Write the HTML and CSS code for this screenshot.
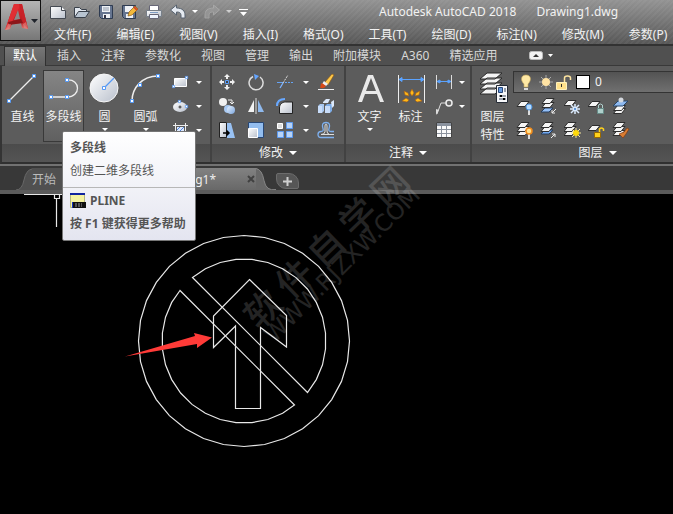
FILE: index.html
```html
<!DOCTYPE html>
<html lang="zh-CN">
<head>
<meta charset="utf-8">
<meta name="viewport" content="width=device-width, initial-scale=1">
<title>Autodesk AutoCAD 2018 Drawing1.dwg</title>
<link rel="stylesheet" href="styles.css">
</head>
<body>
<svg class="defs" width="0" height="0" aria-hidden="true">
  <defs>
    <linearGradient id="metal" x1="0" y1="0" x2="1" y2="1"><stop offset="0" stop-color="#fff"/><stop offset="1" stop-color="#b9c0cc"/></linearGradient>
    <linearGradient id="red" x1="0" y1="0" x2="0" y2="1"><stop offset="0" stop-color="#e3262b"/><stop offset=".7" stop-color="#b51f24"/><stop offset="1" stop-color="#e88a83"/></linearGradient>
    <linearGradient id="glass" x1="0" y1="0" x2="1" y2="1"><stop offset="0" stop-color="#e8f2ff"/><stop offset="1" stop-color="#7aa5dd"/></linearGradient>
    <symbol id="sheet" viewBox="0 0 12 6" overflow="visible"><path d="M4 .5h8L8 5.500H0z" fill="#f4f4f4" stroke="#2d2d2d"/></symbol>
    <symbol id="grip" viewBox="0 0 4 4" overflow="visible"><path d="M.5.5h3v3h-3z" fill="#fff" stroke="#5599f5"/></symbol>
  </defs>
</svg>

<header class="titlebar">
  <button class="app-button" aria-label="应用程序菜单">
    <svg width="39" height="38" viewBox="1 1 39 38"><path d="M5 29 14 3h8l6 25-6-1-1-5-9 1-2 5z" fill="url(#red)"/><path d="M14 3h7L11 23l-6 6z" fill="#e02f34"/><path d="m18 9 2 9-6 1z" fill="#8a8a8a"/><path d="m8 21 13-3 2 4-14 2z" fill="#8c171b"/><path d="m19 3 3 0 6 25-5-6z" fill="#c82228"/><path d="m5 29 3-6 3 0-2 5zM23 23l3-2 2 7-4-1z" fill="#e58a84" opacity=".6"/><path d="M31 18h7l-3.500 4z" fill="#20242c"/></svg>
  </button>
  <div class="bars">
    <div class="quick">
      <button class="tool" aria-label="新建"><svg width="18" height="16"><path d="M1.500 2.500h11l4 4v8h-15z" fill="url(#metal)" stroke="#444a52"/><path d="M12.500 2.500v4h4" fill="#fff" stroke="#444a52"/></svg></button>
      <button class="tool" aria-label="打开"><svg width="18" height="16"><path d="M1.500 13.500v-10h5l2 2h5v2" fill="#dfe5ed" stroke="#39404a"/><path d="m1.500 13.500 4-6h11l-4 6z" fill="#b8c4d1" stroke="#39404a"/></svg></button>
      <button class="tool" aria-label="保存"><svg width="16" height="16"><path d="M1.500 1.500h13v13h-11l-2-2z" fill="#667590" stroke="#2e3b51"/><path d="M4 2h8v6H4zM5 10h7v4H5z" fill="#eef1f5"/><path d="M6 11h2v3H6z" fill="#334"/><path d="M5 4h6M5 6h6" stroke="#8d98a9"/></svg></button>
      <button class="tool" aria-label="另存为"><svg width="18" height="16"><path d="M1.500 1.500h13v13h-11l-2-2z" fill="#667590" stroke="#2e3b51"/><path d="M4 2h8v6H4zM5 10h7v4H5z" fill="#eef1f5"/><path d="m7 12 1-4 6-6 3 3-6 6z" fill="#f2b93b" stroke="#8b5a18" stroke-width=".7"/><path d="m13 3 3 3" stroke="#d34828" stroke-width="2"/></svg></button>
      <button class="tool" aria-label="打印"><svg width="18" height="16"><path d="M4.500 1.500h9v5h-9z" fill="#fff" stroke="#667"/><path d="M1.500 6.500h15v6h-15z" fill="url(#metal)" stroke="#777f89"/><path d="M4.500 10.500h9v4h-9z" fill="#edf4ff" stroke="#667"/><path d="M5 8.500h8" stroke="#7f9cc4"/></svg></button>
      <button class="tool" aria-label="放弃"><svg width="18" height="16"><path d="m1.500 6 6-5v3c6 0 8.500 3 8.500 7v3h-4v-2c0-3-1-4-4.500-4v3z" fill="#e5eaf1" stroke="#586370"/></svg></button>
      <button class="drop" aria-label="放弃列表"><i class="caret"></i></button>
      <button class="tool faded" aria-label="重做"><svg width="18" height="16"><path d="m16.500 6-6-5v3C4.500 4 2 7 2 11v3h4v-2c0-3 1-4 4.500-4v3z" fill="#a0a0a0" stroke="#bbb"/></svg></button>
      <button class="drop faded" aria-label="重做列表"><i class="caret"></i></button>
      <button class="drop custom" aria-label="自定义快速访问工具栏"><svg width="9" height="8"><path d="M0 1h9v1H0zM1 4h7L4.500 8z" fill="#fff"/></svg></button>
      <h1 class="title"><span>Autodesk AutoCAD 2018</span><span>Drawing1.dwg</span></h1>
    </div>
    <nav class="menu">
      <a href="#">文件(F)</a><a href="#">编辑(E)</a><a href="#">视图(V)</a><a href="#">插入(I)</a><a href="#">格式(O)</a><a href="#">工具(T)</a><a href="#">绘图(D)</a><a href="#">标注(N)</a><a href="#">修改(M)</a><a href="#">参数(P)</a>
    </nav>
  </div>
</header>

<nav class="tabs">
  <a class="current" href="#">默认</a><a href="#">插入</a><a href="#">注释</a><a href="#">参数化</a><a href="#">视图</a><a href="#">管理</a><a href="#">输出</a><a href="#">附加模块</a><a href="#">A360</a><a href="#">精选应用</a>
  <button class="fold" aria-label="最小化功能区"><svg width="24" height="9"><rect x=".5" y=".5" width="13" height="8" rx="2" fill="#f3f3f3" stroke="#bbb"/><path d="M4 6h6L7 3z" fill="#333"/><path d="M19 3h5l-2.500 3z" fill="#fff"/></svg></button>
</nav>

<div class="ribbon">
  <section class="panel draw">
    <div class="body">
      <button class="large"><svg width="36" height="34"><path d="M4 30 29 5" stroke="#eee" stroke-width="1.300"/><use href="#grip" x="2" y="28" width="4" height="4"/><use href="#grip" x="27" y="3" width="4" height="4"/></svg>直线</button>
      <div class="anchor">
        <button class="large hot" aria-describedby="tip"><svg width="36" height="34"><path d="M5 26h16c14 0 14-18 0-17" fill="none" stroke="#eee" stroke-width="1.300"/><use href="#grip" x="3" y="24" width="4" height="4"/><use href="#grip" x="19" y="24" width="4" height="4"/><use href="#grip" x="19" y="7" width="4" height="4"/></svg>多段线</button>
        <div class="tooltip" id="tip" role="tooltip">
          <div class="tip-head"><strong>多段线</strong><span>创建二维多段线</span></div>
          <div class="tip-foot">
            <strong class="command"><svg width="16" height="16"><path d="M.5 1.500h14v13H.5z" fill="#f5f3a0" stroke="#b6b680"/><path d="M0 1h15" stroke="#1125a0" stroke-width="2"/><path d="M3 9h13v6H3z" fill="#111"/><path d="M2.500 9v6" stroke="#1232c5"/><path d="M5 11h2m1 0h4M5 13h7" stroke="#999" stroke-dasharray="2 1"/></svg>PLINE</strong>
            <strong>按 F1 键获得更多帮助</strong>
          </div>
        </div>
      </div>
      <button class="large"><svg width="36" height="34"><circle cx="17" cy="17" r="14" fill="url(#metal)" stroke="#f7f7f7"/><path d="m17 17 10-10" stroke="#5599f5" stroke-width="1.300"/><use href="#grip" x="15" y="15" width="4" height="4"/></svg>圆<i class="caret"></i></button>
      <button class="large"><svg width="36" height="34"><path d="M4 30C4 17 14 5 30 5" fill="none" stroke="#eee" stroke-width="1.500"/><use href="#grip" x="2" y="28" width="4" height="4"/><use href="#grip" x="10" y="12" width="4" height="4"/><use href="#grip" x="28" y="3" width="4" height="4"/></svg>圆弧<i class="caret"></i></button>
      <div class="grid pair">
        <button aria-label="矩形"><svg width="18" height="18"><path d="M2.500 5.500h12v8h-12z" fill="url(#metal)" stroke="#fff"/><use href="#grip" x="0" y="12" width="3" height="3"/><use href="#grip" x="13" y="3" width="3" height="3"/></svg></button><button aria-label="矩形列表"><i class="caret"></i></button>
        <button aria-label="椭圆"><svg width="18" height="18"><ellipse cx="8" cy="10" rx="7" ry="5" fill="url(#metal)"/><path d="M6.500 10h3M8 8.500v3" stroke="#333"/><use href="#grip" x="6" y="3" width="3" height="3"/><use href="#grip" x="13" y="8" width="3" height="3"/></svg></button><button aria-label="椭圆列表"><i class="caret"></i></button>
        <button aria-label="图案填充"><svg width="18" height="18"><path d="M1 4.500h15M1 14.500h15M3.500 2v15M13.500 2v15" stroke="#eee"/><path d="M5 6h7v7H5z" fill="#dce9ff"/><path d="m5 9 3-3m-3 7 7-7m-3 7 3-3" stroke="#5284d8"/></svg></button><button aria-label="图案填充列表"><i class="caret"></i></button>
      </div>
    </div>
    <h2><a href="#">绘图<i class="caret big"></i></a></h2>
  </section>

  <section class="panel modify">
    <div class="body">
      <div class="grid four">
        <button aria-label="移动"><svg width="18" height="18"><path d="M9 1 6 4h6zM9 17l-3-3h6zM1 9l3-3v6zM17 9l-3-3v6z" fill="#f1f1f1"/><path d="M9 3v3m0 6v3M3 9h3m6 0h3" stroke="#eee" stroke-width="2"/><path d="M7.500 7.500h3v3h-3z" fill="#444" stroke="#5aa0ff"/></svg></button>
        <button aria-label="旋转"><svg width="18" height="18"><path d="M6 3.500a7 7 0 1 0 7 .5" fill="none" stroke="#ddd" stroke-width="1.500"/><path d="m7 1 5 2-4 4z" fill="#64a5ff"/></svg></button>
        <button aria-label="修剪"><svg width="18" height="18"><path d="M1 9.500h6" stroke="#65a3f4"/><path d="M9 9.500h8" stroke="#65a3f4" stroke-dasharray="2 1"/><path d="m4 15 3-5" stroke="#7fb4ff" stroke-width="1.300"/><path d="m7 10 5-8" stroke="#ddd" stroke-dasharray="2 1"/></svg></button>
        <button aria-label="修剪列表"><i class="caret"></i></button>
        <button aria-label="删除"><svg width="18" height="18"><path d="M1 16.500h16" stroke="#eee"/><path d="m8 9 7-8 2 1-6 10z" fill="#ffc94a" stroke="#8d5710" stroke-width=".6"/><path d="m7 8 4 3-2 2-4-2z" fill="#eee"/><path d="m5 10 4 3c-2 3-4 2-6 2 1-1 0-4 2-5" fill="#d84a16"/></svg></button>

        <button aria-label="复制"><svg width="18" height="18"><circle cx="5" cy="5" r="4" fill="#f1f1f1"/><circle cx="10" cy="12" r="4" fill="#a9caf3"/><circle cx="13" cy="13" r="4" fill="url(#glass)"/><path d="M10 3h4v4m-2-2 2 2 2-2" fill="none" stroke="#eee"/></svg></button>
        <button aria-label="镜像"><svg width="18" height="18"><path d="M9 1v16" stroke="#ddd"/><path d="M7 3v12H1z" fill="#f3f3f3"/><path d="M11 3v12h6z" fill="#8fb9ed"/></svg></button>
        <button aria-label="圆角"><svg width="18" height="18"><path d="M3.500 16.500V11c0-4 3-6 6-6h7v11.500z" fill="url(#metal)" stroke="#222"/><path d="M1 9c0-5 3-7 8-7" fill="none" stroke="#68a8ff" stroke-width="2"/></svg></button>
        <button aria-label="圆角列表"><i class="caret"></i></button>
        <button aria-label="分解"><svg width="18" height="18"><path d="m1 9 2-2h4v7l-2 2H1z" fill="#a9c8f0"/><path d="m8 9 2-2h5v7l-2 2H8z" fill="#7faee8"/><path d="M8 9h5v7H8zM1 9h4v7H1z" fill="#c8ddfa"/><path d="m6 5 3-3h4l-2 4H6zM14 5l3-2v6l-2 2z" fill="#dce9fb"/></svg></button>

        <button aria-label="拉伸"><svg width="18" height="18"><path d="M1.500 1.500h7v15h-7z" fill="url(#metal)" stroke="#222"/><path d="M9 2h4l4 15H9z" fill="#98c1f3"/><path d="M5 12h6M8.500 9.500 11 12l-2.500 2.500" fill="none" stroke="#000" stroke-width="1.500"/></svg></button>
        <button aria-label="缩放"><svg width="18" height="18"><path d="M1.500 1.500h15v15h-15z" fill="#93bdee" stroke="#284774"/><path d="M1.500 7.500h9v9h-9z" fill="url(#metal)" stroke="#fff"/></svg></button>
        <button aria-label="阵列"><svg width="18" height="18"><path d="M1.500 2.500h5v5h-5z" fill="#ddd" stroke="#fff"/><path d="M10.500 1.500h6v6h-6zM1.500 10.500h6v6h-6zM10.500 10.500h6v6h-6z" fill="#b8d3f6" stroke="#5d9aef"/></svg></button>
        <button aria-label="阵列列表"><i class="caret"></i></button>
        <button aria-label="偏移"><svg width="18" height="18"><path d="M17 16.500H4q-3 0-3-3t3-3q3 0 2-3-2-6 3-6t3 6q-1 3 2 3h3" fill="none" stroke="#7eb0ef" stroke-width="1.300"/><path d="M17 13.500H4q4 0 4-3V5q0-2 1-2t1 2v5q0 3 2 3" fill="none" stroke="#ddd"/></svg></button>
      </div>
    </div>
    <h2><a href="#">修改<i class="caret big"></i></a></h2>
  </section>

  <section class="panel annotate">
    <div class="body">
      <button class="large"><svg width="36" height="34"><path d="m6 31 10-27h5l11 27h-4l-3-8H13l-3 8zm8-11h10l-5-13z" fill="#e9e9e9"/></svg>文字<i class="caret"></i></button>
      <button class="large"><svg width="36" height="34"><path d="M5.500 4v28M31.500 4v28" stroke="#eee"/><path d="M6 8.500h25M9 6.500 6 8.500l3 2zM28 6.500l3 2-3 2z" fill="#5ba3ff" stroke="#5ba3ff"/><g fill="#ffba18" stroke="#a65b15" stroke-width=".6"><path d="m17 22 2-4 2 4-2 3zM11 20l4 2 1 3-4-1zM27 20l-4 2-1 3 4-1zM9 30l4-3 3 2-2 2zM29 30l-4-3-3 2 2 2z"/></g></svg>标注</button>
      <div class="grid pair">
        <button aria-label="线性"><svg width="18" height="18"><path d="M1.500 2v14M16.500 2v14" stroke="#ddd"/><path d="M2 8.500h14M5 7 2 8.500 5 10zm8 0 3 1.500-3 1.500z" fill="#5ba3ff" stroke="#5ba3ff"/></svg></button><button aria-label="线性列表"><i class="caret"></i></button>
        <button aria-label="引线"><svg width="18" height="18"><path d="m2 17 4-11h5" fill="none" stroke="#ddd"/><path d="m1 12 3 1-3 5z" fill="#ddd"/><circle cx="14" cy="6" r="3" fill="#666" stroke="#eee" stroke-width="1.500"/></svg></button><button aria-label="引线列表"><i class="caret"></i></button>
        <button aria-label="表格"><svg width="18" height="18"><path d="M1.500 1.500h15v15h-15z" fill="#fafafa" stroke="#444"/><path d="M2 2h14v3H2z" fill="#8a929e"/><path d="M2 8.500h14m-14 4h14M6.500 5v11M11.500 5v11" stroke="#8b929d"/></svg></button>
      </div>
    </div>
    <h2><a href="#">注释<i class="caret big"></i></a></h2>
  </section>

  <section class="panel layers">
    <div class="body">
      <button class="large"><svg width="36" height="34"><g fill="#f5f5f5" stroke="#292929"><path d="m12 17-7 6h15l7-6zM12 12l-7 6h15l7-6zM12 7l-7 6h15l7-6zM12 2 5 8h15l7-6z"/></g><path d="M21.500 14.500h11v17h-11z" fill="#f7f8fa" stroke="#252b35"/><path d="M23.500 16.500h4v5h-4z" fill="#669be1" stroke="#274679"/><path d="M29 18h2m-2 2h2m-7 5h7m-7 3h7" stroke="#344258"/><path d="M26 24v2m3 1v2" stroke="#000" stroke-width="2"/></svg><span>图层<br>特性</span></button>
      <div class="layer-tools">
        <label class="layer-box">
          <svg width="64" height="18"><path d="M7 2c-5 0-6 5-2 9v3h4v-3C13 7 12 2 7 2" fill="#ffe9a5" stroke="#c7a75b" stroke-width=".6"/><path d="M5 15h4v2H5z" fill="#ddd"/><path d="M27 2v14M20 9h14M22 4l10 10M32 4 22 14" stroke="#aaa"/><circle cx="27" cy="9" r="4" fill="#ffe3a4"/><path d="M37.500 9.500h10v7h-10z" fill="#ffe18b" stroke="#fff2bd"/><path d="M45.500 9V5q0-2 3-2t3 2v2" fill="none" stroke="#ffe5a0" stroke-width="1.500"/><path d="M42.500 11v3" stroke="#333"/></svg>
          <span class="swatch"></span>
          <select aria-label="图层"><option>0</option></select>
        </label>
        <div class="layer-grid">
          <button aria-label="关"><svg width="18" height="18"><use href="#sheet" x="1" y="4" width="12" height="6"/><path d="M13 12v6" stroke="#ddd" stroke-width="2"/><circle cx="13" cy="10" r="3" fill="#b7dcff" stroke="#4f94de"/></svg></button>
          <button aria-label="隔离"><svg width="18" height="18"><path d="m5 11-4 4h8l4-4z" fill="#94bff6" stroke="#263e60"/><use href="#sheet" x="2" y="5" width="12" height="6"/><use href="#sheet" x="2" y="1" width="12" height="6"/><path d="m16 12-4 4m0-3v3h3" fill="none" stroke="#eee"/></svg></button>
          <button aria-label="冻结"><svg width="18" height="18"><use href="#sheet" x="0" y="3" width="12" height="6"/><path d="M11 7v10M6 12h10M7 8l8 8m0-8-8 8" stroke="#dcecff" stroke-width="1.500"/><circle cx="11" cy="12" r="1" fill="#3878c7"/></svg></button>
          <button aria-label="锁定"><svg width="18" height="18"><use href="#sheet" x="0" y="4" width="12" height="6"/><path d="M9.500 11.500h6v5h-6z" fill="#afd0cc" stroke="#668b87"/><path d="M10.500 11V8q2-2 4 0v3" fill="none" stroke="#afd0cc"/></svg></button>
          <button aria-label="置为当前"><svg width="18" height="18"><use href="#sheet" x="1" y="11" width="13" height="6"/><use href="#sheet" x="1" y="8" width="13" height="6"/><path d="m6 4-5 5h10l5-5z" fill="#8db9f0" stroke="#294467"/><circle cx="9" cy="3" r="2.500" fill="#d5d9df"/></svg></button>
          <button aria-label="打开所有图层"><svg width="18" height="18"><use href="#sheet" x="1" y="9" width="12" height="6"/><use href="#sheet" x="1" y="5" width="12" height="6"/><use href="#sheet" x="1" y="1" width="12" height="6"/><path d="M13 12v6" stroke="#ddd" stroke-width="2"/><circle cx="13" cy="10" r="3" fill="#ffe18e" stroke="#f28c1d" stroke-width="1.500"/></svg></button>
          <button aria-label="取消隔离"><svg width="18" height="18"><path d="m5 9-4 4h8l4-4z" fill="#75acf4" stroke="#263e60"/><use href="#sheet" x="1" y="5" width="12" height="6"/><use href="#sheet" x="1" y="1" width="12" height="6"/><path d="m11 17 4-4m-3 0h3v3" fill="none" stroke="#eee"/></svg></button>
          <button aria-label="解冻"><svg width="18" height="18"><use href="#sheet" x="0" y="9" width="12" height="6"/><use href="#sheet" x="0" y="5" width="12" height="6"/><use href="#sheet" x="0" y="1" width="12" height="6"/><path d="M12 7v10M7 12h10M8 8l8 8m0-8-8 8" stroke="#f6e69d"/><circle cx="12" cy="12" r="3" fill="#ffd90b"/></svg></button>
          <button aria-label="解锁"><svg width="18" height="18"><use href="#sheet" x="0" y="4" width="12" height="6"/><path d="M6.500 11.500h6v5h-6z" fill="#ffd21c" stroke="#9a6a00"/><path d="M11.500 11V8q2-2 4 0v2" fill="none" stroke="#ffd21c" stroke-width="1.500"/></svg></button>
          <button aria-label="匹配图层"><svg width="18" height="18"><use href="#sheet" x="1" y="9" width="12" height="6"/><use href="#sheet" x="1" y="5" width="12" height="6"/><use href="#sheet" x="1" y="1" width="12" height="6"/><path d="m7 13 5-2 3-4 2 1-3 5-3 4z" fill="#d87c32" stroke="#7c3b16" stroke-width=".7"/></svg></button>
        </div>
      </div>
    </div>
    <h2><a href="#">图层<i class="caret big"></i></a></h2>
  </section>
</div>

<main class="workspace">
  <nav class="files">
    <a class="file start" href="#"><svg class="edge" width="16" height="22"><path d="M0 22Q6 22 8 12T16 1h1v21z" fill="#505050"/><path d="M0 22Q6 22 8 12T16 1" fill="none" stroke="#686868"/></svg><span>开始</span></a>
    <div class="file open"><a href="#">Drawing1*</a><button class="close" aria-label="关闭"><svg width="8" height="8"><path d="m1 1 6 6m0-6L1 7" stroke="#414141" stroke-width="2"/></svg></button><svg class="edge" width="20" height="22"><path d="M0 0q6 1 8 12t12 10H0z" fill="#686868"/><path d="M0 .5q6 1 8 12t12 9" fill="none" stroke="#858585"/></svg></div>
    <button class="add" aria-label="新图形"><svg width="9" height="9"><path d="M4.500 0v9M0 4.500h9" stroke="#d0d0d0" stroke-width="2"/></svg></button>
  </nav>
  <div class="canvas"></div>
  <svg class="drawing" width="673" height="350" viewBox="0 164 673 350" role="img" aria-label="禁止直行标志">
    <g fill="none" stroke="#e8e8e8" stroke-width="1.200">
      <path d="M24 194.500h39M54.500 194.500h5v4h-5zM56.500 199v28"/>
      <path d="M244 235.500 264.600 237.500 284.400 243.500 302.600 253.300 318.600 266.400 331.700 282.400 341.500 300.600 347.500 320.400 349.500 341 347.500 361.600 341.500 381.400 331.700 399.600 318.600 415.600 302.600 428.700 284.400 438.500 264.600 444.500 244 446.500 223.400 444.500 203.600 438.500 185.400 428.700 169.400 415.600 156.300 399.600 146.500 381.400 140.500 361.600 138.500 341 140.500 320.400 146.500 300.600 156.300 282.400 169.400 266.400 185.400 253.300 203.600 243.500 223.400 237.500z"/>
      <path d="M192.500 277.500 205.400 268.700 220.200 262.500 236 259.400H252L267.800 262.500 282.600 268.700 296 277.600 307.400 289 316.300 302.400 322.500 317.200 325.500 333V349L322.500 364.800 316.300 379.600 307.500 392.500z"/>
      <path d="M180 290.500 171.700 302.400 165.500 317.200 162.400 333V349L165.500 364.800 171.700 379.600 180.600 393 192 404.400 205.400 413.300 220.200 419.500 236 422.600H252L267.800 419.500 282.600 413.300 294.500 405z"/>
      <path d="m249.500 279.500 37 36v31.500l-26-19.500v81h-25V326l-22 21.500V316z"/>
    </g>
    <path d="m125 356.500 70-20.500-1-3 18 4.500-15 10.500v-4z" fill="#ff3b38"/>
    <g class="watermark">
      <text transform="translate(259 331) rotate(-44)" class="mark-name">软 件 自 学 网</text>
      <text transform="translate(274 344) rotate(-45)" class="mark-site">WWW.RJZXW.COM</text>
    </g>
  </svg>
</main>
</body>
</html>
```
FILE: styles.css
```css
* { box-sizing: border-box; }

body {
  margin: 0;
  min-height: 100vh;
  display: flex;
  flex-direction: column;
  overflow-x: hidden;
  background: #000;
  color: #f2f2f2;
  font: 12px/16px "Noto Sans", "Noto Sans CJK SC", sans-serif;
}

button, select { font: inherit; color: inherit; }
button { padding: 0; border: 0; background: none; display: flex; align-items: center; justify-content: center; }
a { color: inherit; text-decoration: none; white-space: nowrap; }
svg { display: block; flex: none; }
.defs { position: absolute; }

.caret { display: block; border: 3px solid transparent; border-top-color: #fff; border-bottom: 0; }
.caret.big { border-width: 4px; border-bottom: 0; }

/* Title bar */
.titlebar {
  display: flex;
  height: 46px;
  border-bottom: 2px solid #323232;
  background:
    repeating-linear-gradient(135deg, rgba(255, 255, 255, .04) 0 2px, transparent 2px 4px),
    linear-gradient(#939393, #575757);
}
.app-button {
  width: 41px;
  height: 41px;
  flex: none;
  border: 1px solid #111;
  background: linear-gradient(#b5b5b5, #777);
}
.bars { flex: 1; min-width: 0; padding-left: 5px; }
.quick { display: flex; align-items: center; height: 23px; }
.tool { width: 24px; height: 20px; flex: none; }
.drop { width: 10px; height: 20px; flex: none; }
.custom { width: 18px; }
.faded { opacity: .6; }
.title { display: flex; gap: 20px; margin: 0 0 0 127px; font-size: 12px; font-weight: 400; white-space: nowrap; }
.menu { display: flex; gap: 25px; padding: 4px 0 0 8px; }

/* Ribbon tabs */
.tabs {
  display: flex;
  align-items: center;
  gap: 20px;
  height: 20px;
  padding-left: 4px;
  background: #505050;
  border-bottom: 1px solid #393939;
  color: #d8d8d8;
}
.tabs .current {
  margin-right: -9px;
  padding: 1px 8px 2px;
  border: 1px solid #303030;
  border-bottom: 0;
  background: linear-gradient(#777, #606060);
  color: #fff;
}
.fold { margin-left: 12px; }

/* Ribbon panels */
.ribbon {
  display: flex;
  height: 98px;
  border-left: 2px solid #343434;
  border-bottom: 2px solid #303030;
  background: #5c5c5c;
}
.panel { display: flex; flex-direction: column; flex: none; border-right: 2px solid #424242; }
.draw { width: 210px; }
.modify { width: 134px; }
.annotate { width: 126px; }
.layers { flex: 1; min-width: 0; border-right: 0; }
.body { display: flex; flex: 1; padding-top: 4px; }
.panel h2 {
  display: flex;
  justify-content: center;
  margin: 0;
  height: 18px;
  background: linear-gradient(#4b4b4b, #545454);
  font-size: 12px;
  font-weight: 400;
  line-height: 18px;
}
.panel h2 a { display: flex; align-items: center; gap: 6px; }
.panel.layers h2 { padding-left: 50px; }

.large {
  flex-direction: column;
  justify-content: flex-start;
  width: 41px;
  height: 72px;
  gap: 3px;
  border: 1px solid transparent;
  line-height: 18px;
  white-space: nowrap;
}
.large .caret { margin-top: -1px; }
.hot { border-color: #393939; background: linear-gradient(#858585, #606060); }
.anchor { position: relative; }

.grid { display: grid; grid-auto-rows: 24px; }
.pair { grid-template-columns: 22px 14px; margin-left: 4px; }
.four { grid-template-columns: 29px 29px 29px 14px 1fr; width: 127px; }

.annotate .body { padding-left: 3px; }
.annotate .pair { margin-left: 2px; }

.layer-tools { flex: 1; min-width: 0; }
.layer-box {
  display: flex;
  align-items: center;
  height: 22px;
  margin-top: 1px;
  padding-left: 5px;
  border: 1px solid #343434;
  border-right: 0;
  background: linear-gradient(#535353, #707070);
}
.swatch { width: 14px; height: 14px; flex: none; margin-right: 5px; border: 1px solid #000; background: #fff; }
.layer-box select { flex: 1; min-width: 0; appearance: none; padding: 0; border: 0; background: none; }
.layer-box svg { width: 57px; }
.layer-grid { display: grid; grid-template-columns: repeat(5, 24px); grid-auto-rows: 24px; padding-top: 1px; }

/* Tooltip */
.tooltip {
  position: absolute;
  z-index: 2;
  top: 61px;
  left: 19px;
  width: max-content;
  border: 1px solid #767676;
  border-radius: 2px;
  background: linear-gradient(#fff, #e4e5f0);
  color: #555;
  white-space: nowrap;
}
.tip-head, .tip-foot { display: flex; flex-direction: column; gap: 7px; padding: 8px 9px 8px 7px; }
.tip-head { border-bottom: 1px solid #b7b7b7; }
.tip-foot { padding-top: 5px; }
.command { display: flex; align-items: center; gap: 4px; }

/* Drawing area */
.workspace { position: relative; flex: 1; display: flex; flex-direction: column; min-height: 350px; overflow: hidden; }
.files {
  display: flex;
  align-items: flex-end;
  height: 30px;
  border-top: 2px solid #727272;
  border-bottom: 4px solid #5b5b5b;
  background: #383838;
}
.file { display: flex; align-items: center; height: 22px; }
.start { padding-left: 16px; color: #bbb; }
.start span { flex: 1; height: 22px; padding-right: 20px; background: #505050; line-height: 24px; }
.open { color: #eee; }
.open a { width: 170px; height: 22px; padding-right: 30px; text-align: right; background: linear-gradient(#828282, #686868); line-height: 24px; }
.close { width: 10px; height: 22px; background: linear-gradient(#828282, #686868); }
.add { width: 23px; height: 16px; margin-bottom: 1px; border: 1px solid #6c6c6c; border-radius: 2px 10px 2px 10px; background: #565656; }
.canvas { flex: 1; background: #000; }
.drawing { position: absolute; top: 0; left: 0; pointer-events: none; }
.watermark { fill: #fff; opacity: .14; }
.mark-name { font: 500 36px "Noto Sans CJK SC", sans-serif; }
.mark-site { font: 23px "DejaVu Sans", sans-serif; }
```
